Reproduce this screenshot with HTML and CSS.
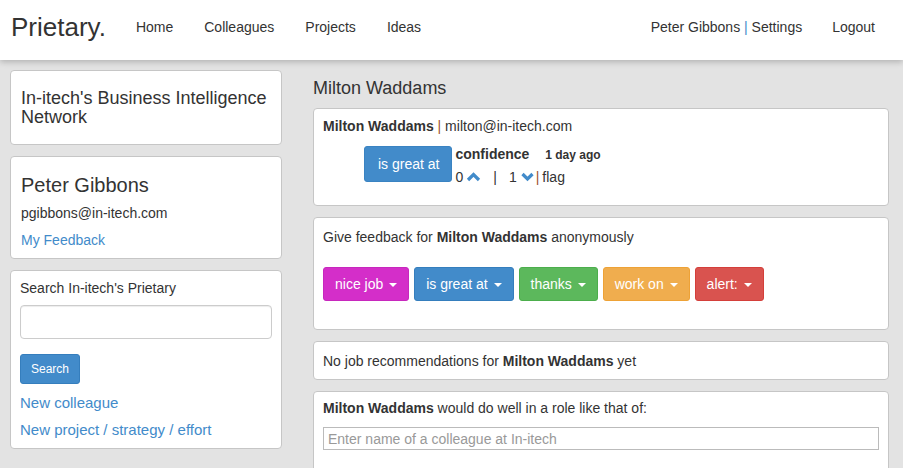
FILE: index.html
```html
<!DOCTYPE html>
<html>
<head>
<meta charset="utf-8">
<link rel="stylesheet" href="styles.css">
</head>
<body>
<nav class="navbar">
  <a class="brand">Prietary.</a>
  <ul class="nav">
    <li><a>Home</a></li>
    <li><a>Colleagues</a></li>
    <li><a>Projects</a></li>
    <li><a>Ideas</a></li>
  </ul>
  <ul class="nav nav-right">
    <li><a>Peter Gibbons <span class="sep-blue">|</span> Settings</a></li>
    <li><a>Logout</a></li>
  </ul>
</nav>

<div class="page">
  <aside class="sidebar">
    <div class="card card-network">
      <h3 class="network-title">In-itech's Business Intelligence Network</h3>
    </div>
    <div class="card card-user">
      <h2 class="user-name">Peter Gibbons</h2>
      <div class="user-email">pgibbons@in-itech.com</div>
      <a class="link">My Feedback</a>
    </div>
    <div class="card card-search">
      <div class="search-label">Search In-itech's Prietary</div>
      <input class="search-input" type="text">
      <button class="btn-search">Search</button>
      <a class="link link-lg">New colleague</a>
      <a class="link link-lg">New project / strategy / effort</a>
    </div>
  </aside>

  <main class="main">
    <h1 class="page-title">Milton Waddams</h1>

    <div class="card card-profile">
      <div><b>Milton Waddams</b> <span class="sep-red">|</span> milton@in-itech.com</div>
      <div class="feedback-item">
        <span class="tag tag-blue">is great at</span>
        <div class="feedback-body">
          <div><b>confidence</b> <span class="ago">1 day ago</span></div>
          <div class="votes">
            <span>0</span>
            <svg class="chev" width="15" height="10" viewBox="0 0 15 10"><polyline points="2,8 7.5,2.5 13,8" fill="none" stroke="#428bca" stroke-width="3.2"/></svg>
            <span class="vsep">|</span>
            <span>1</span>
            <svg class="chev chev-down" width="13" height="10" viewBox="0 0 13 10"><polyline points="1.5,2 6.5,7 11.5,2" fill="none" stroke="#428bca" stroke-width="3.2"/></svg>
            <span class="sep-red vote-flag-sep">|</span>
            <span>flag</span>
          </div>
        </div>
      </div>
    </div>

    <div class="card card-give">
      <div>Give feedback for <b>Milton Waddams</b> anonymously</div>
      <div class="btn-row">
        <button class="btn btn-pink">nice job <span class="caret"></span></button>
        <button class="btn btn-blue">is great at <span class="caret"></span></button>
        <button class="btn btn-green">thanks <span class="caret"></span></button>
        <button class="btn btn-orange">work on <span class="caret"></span></button>
        <button class="btn btn-red">alert: <span class="caret"></span></button>
      </div>
    </div>

    <div class="card card-jobs">
      No job recommendations for <b>Milton Waddams</b> yet
    </div>

    <div class="card card-role">
      <div><b>Milton Waddams</b> would do well in a role like that of:</div>
      <input class="role-input" type="text" placeholder="Enter name of a colleague at In-itech">
    </div>
  </main>
</div>
</body>
</html>
```

FILE: styles.css
```css
* { box-sizing: border-box; }

html, body {
  margin: 0;
  padding: 0;
  background: #e3e3e3;
  font-family: "Liberation Sans", Arial, Helvetica, sans-serif;
  font-size: 14px;
  line-height: 20px;
  color: #333;
  overflow: hidden;
}

b { font-weight: bold; }

.navbar {
  height: 60px;
  background: #fff;
  display: flex;
  align-items: flex-start;
  box-shadow: 0 2px 6px rgba(0, 0, 0, 0.22);
  position: relative;
  z-index: 2;
}

.brand {
  font-size: 26px;
  line-height: 30px;
  padding: 12px 15px 0 11px;
  color: #333;
}

.nav {
  list-style: none;
  margin: 0;
  padding: 0;
  display: flex;
}

.nav li a {
  display: block;
  padding: 17px 15px 0;
  line-height: 20px;
  color: #333;
}

.nav li + li a { padding-left: 16px; }

.nav-right {
  margin-left: auto;
  margin-right: 13px;
}

.nav-right li + li a { padding-left: 15px; }

.sep-blue { color: #428bca; }
.sep-red { color: #a0522d; }

.page {
  display: flex;
  align-items: flex-start;
  padding: 10px 14px 0 10px;
  gap: 31px;
}

.sidebar {
  width: 272px;
  flex: none;
  display: flex;
  flex-direction: column;
  gap: 11px;
}

.main {
  flex: 1;
  display: flex;
  flex-direction: column;
  gap: 11px;
}

.card {
  background: #fff;
  border: 1px solid #c6c6c6;
  border-radius: 4px;
}

.card-network { padding: 18px 10px 17px; height: 75px; }
.network-title {
  margin: 0;
  font-size: 18px;
  line-height: 19px;
  font-weight: normal;
}

.card-user { padding: 17px 10px 8px; display: flex; flex-direction: column; }
.user-name {
  margin: 0 0 7px;
  font-size: 20px;
  line-height: 22px;
  font-weight: normal;
}
.user-email { margin-bottom: 7px; }

.link { color: #428bca; text-decoration: none; }

.card-search { padding: 7px 9px 8px; display: flex; flex-direction: column; }
.search-input {
  margin-top: 7px;
  height: 34px;
  width: 100%;
  border: 1px solid #ccc;
  border-radius: 4px;
  box-shadow: inset 0 1px 1px rgba(0, 0, 0, 0.075);
}
.btn-search {
  align-self: flex-start;
  margin-top: 15px;
  height: 30px;
  padding: 0 10px;
  background: #428bca;
  border: 1px solid #357ebd;
  border-radius: 3px;
  color: #fff;
  font-family: inherit;
  font-size: 12px;
}
.link-lg { font-size: 15px; line-height: 20px; margin-top: 7px; }
.btn-search + .link-lg { margin-top: 9px; }

.page-title {
  margin: 8px 0 -1px;
  font-size: 18px;
  line-height: 20px;
  font-weight: normal;
}

.card-profile { padding: 7px 9px 17px; }
.feedback-item {
  display: flex;
  align-items: flex-start;
  margin: 7px 0 0 41px;
}
.tag {
  display: inline-block;
  margin-top: 3px;
  height: 36px;
  line-height: 34px;
  padding: 0 12px 0 13px;
  border-radius: 3px;
  color: #fff;
}
.tag-blue { background: #428bca; border: 1px solid #3a83c2; }
.feedback-body { margin-left: 3px; line-height: 22px; }
.ago { font-size: 12px; font-weight: bold; margin-left: 12px; }
.votes { display: flex; align-items: center; height: 22px; }
.chev { margin: 0 0 0 3px; }
.chev-down { margin-left: 4px; }
.vsep { margin: 0 12px 0 12px; }
.vote-flag-sep { margin-left: 2px; margin-right: 3px; }

.card-give { padding: 9px 9px 28px; }
.btn-row { display: flex; gap: 5px; margin-top: 20px; }
.btn {
  height: 34px;
  padding: 0 11px;
  border-radius: 3px;
  border: 1px solid transparent;
  color: #fff;
  font-family: inherit;
  font-size: 14px;
  line-height: 20px;
}
.btn-pink { background: #d42ec9; border-color: #c728bd; }
.btn-blue { background: #428bca; border-color: #357ebd; }
.btn-green { background: #5cb85c; border-color: #4cae4c; }
.btn-orange { background: #f0ad4e; border-color: #eea236; }
.btn-red { background: #d9534f; border-color: #d43f3a; }
.caret {
  display: inline-block;
  width: 0;
  height: 0;
  margin-left: 2px;
  vertical-align: middle;
  border-top: 4px solid #fff;
  border-left: 4px solid transparent;
  border-right: 4px solid transparent;
}

.card-jobs { padding: 9px 9px 8px; }

.card-role { padding: 6px 9px 30px; }
.role-input {
  display: block;
  width: 100%;
  margin-top: 9px;
  height: 23px;
  border: 1px solid #bbb;
  padding: 0 4px;
  font-family: inherit;
  font-size: 14px;
  color: #333;
}
.role-input::placeholder { color: #999; }
```
